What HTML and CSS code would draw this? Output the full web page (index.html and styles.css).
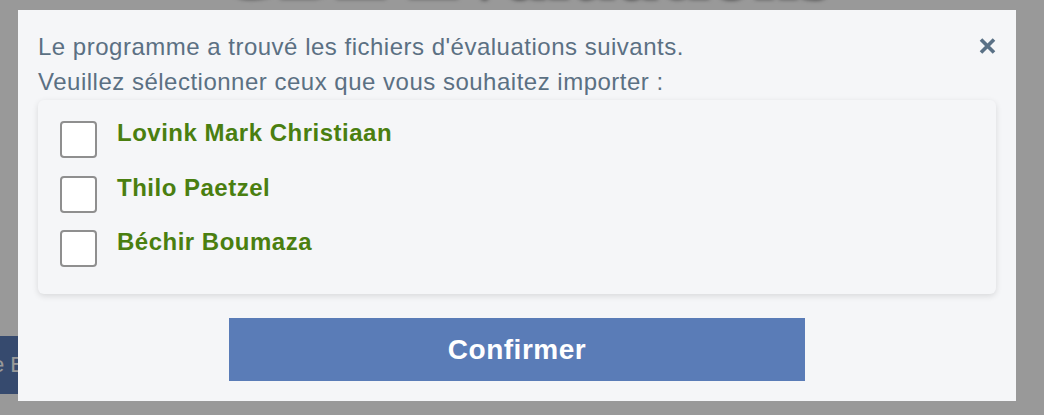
FILE: index.html
```html
<!DOCTYPE html>
<html lang="fr">
<head>
<meta charset="utf-8">
<title>Import</title>
<link rel="stylesheet" href="styles.css">
</head>
<body>
  <main class="page">
    <h1 class="page-title">CBL Évaluations</h1>
    <div class="page-actions">
      <button class="page-btn">le Bilan</button>
    </div>
  </main>
  <div class="overlay"></div>
  <div class="modal">
    <button class="close" aria-label="Fermer">
      <svg width="17" height="16" viewBox="0 0 17 16"><path d="M2 1.5 L15 14.5 M15 1.5 L2 14.5" stroke="#5a7186" stroke-width="3.6" fill="none"/></svg>
    </button>
    <p class="intro">Le programme a trouvé les fichiers d'évaluations suivants.<br>Veuillez sélectionner ceux que vous souhaitez importer :</p>
    <div class="card">
      <label class="row"><input type="checkbox" class="box"><span class="name">Lovink Mark Christiaan</span></label>
      <label class="row"><input type="checkbox" class="box"><span class="name">Thilo Paetzel</span></label>
      <label class="row"><input type="checkbox" class="box"><span class="name">Béchir Boumaza</span></label>
    </div>
    <div class="actions">
      <button class="confirm">Confirmer</button>
    </div>
  </div>
</body>
</html>
```

FILE: styles.css
```css
* { box-sizing: border-box; }
html, body { margin: 0; padding: 0; }
body {
  width: 1044px;
  height: 415px;
  overflow: hidden;
  background: #ffffff;
  font-family: "Liberation Sans", Arial, sans-serif;
  position: relative;
}
.page {
  display: flex;
  flex-direction: column;
}
.page-title {
  margin: -72px 0 0 0;
  text-align: center;
  font-family: "Liberation Serif", serif;
  font-size: 84px;
  font-weight: bold;
  color: #5a7cb7;
  text-shadow: 3px 3px 4px rgba(0,0,0,0.6);
  line-height: 80px;
}
.page-actions {
  margin-top: 328px;
  display: flex;
}
.page-btn {
  margin-left: -150px;
  width: 300px;
  height: 58px;
  border: 0;
  background: #5a7cb7;
  color: #ffffff;
  font-family: "Liberation Sans", Arial, sans-serif;
  font-size: 22px;
  text-align: left;
  padding: 0 0 0 137px;
  flex: none;
}
.overlay {
  position: fixed;
  inset: 0;
  background: rgba(0,0,0,0.4);
}
.modal {
  position: absolute;
  left: 18px;
  top: 10px;
  width: 998px;
  height: 391px;
  background: #f5f6f8;
  padding: 19px 20px 20px 20px;
  display: flex;
  flex-direction: column;
}
.close {
  position: absolute;
  top: 28px;
  right: 20px;
  width: 17px;
  height: 16px;
  padding: 0;
  border: 0;
  background: none;
  display: block;
}
.close svg { display: block; }
.intro {
  margin: 0 0 1px 0;
  font-size: 24px;
  letter-spacing: 0.5px;
  line-height: 35px;
  color: #5b7083;
}
.card {
  background: #f5f6f8;
  border-radius: 6px;
  box-shadow: 0 2px 6px rgba(0,0,0,0.12);
  padding: 19px 22px 27px 22px;
  display: flex;
  flex-direction: column;
  gap: 15.5px;
}
.row {
  display: flex;
  align-items: flex-start;
  gap: 20px;
}
.box {
  appearance: none;
  -webkit-appearance: none;
  margin: 2px 0 0 0;
  width: 37px;
  height: 37px;
  background: #ffffff;
  border: 2px solid #8f8f8f;
  border-radius: 4px;
  flex: none;
}
.name {
  font-size: 24px;
  font-weight: bold;
  letter-spacing: 0.5px;
  line-height: 27px;
  color: #4a7f10;
}
.actions {
  margin-top: 24px;
  display: flex;
  justify-content: center;
}
.confirm {
  width: 576px;
  height: 63px;
  border: 0;
  background: #5a7cb7;
  color: #ffffff;
  font-family: "Liberation Sans", Arial, sans-serif;
  font-size: 28px;
  font-weight: bold;
  letter-spacing: 0.5px;
  padding: 0;
}
```
